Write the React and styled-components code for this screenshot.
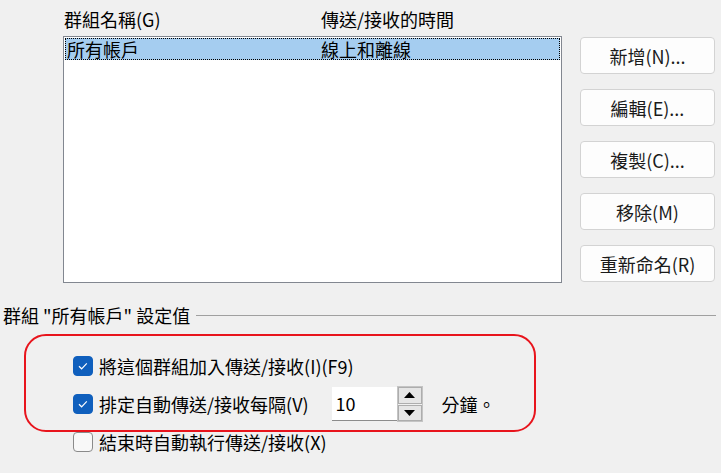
import React from "react";
import styled, { createGlobalStyle } from "styled-components";

const GlobalStyle = createGlobalStyle`
  body {
    margin: 0;
    background: #f0f0f0;
    font-family: "Noto Sans CJK TC", "Noto Sans", sans-serif;
    color: #000;
  }
`;

const Page = styled.div`
  width: 721px;
  height: 473px;
  overflow: hidden;
  font-size: 18px;
  line-height: 24px;
`;

const TopSection = styled.div`
  display: flex;
  gap: 18px;
  padding-left: 63px;
  height: 283px;
`;

const ListColumn = styled.div`
  width: 499px;
  display: flex;
  flex-direction: column;
`;

const HeaderRow = styled.div`
  display: flex;
  height: 36px;
  box-sizing: border-box;
  padding: 7px 0 0 1px;
`;

const Cell = styled.span`
  width: ${(p) => p.$width || "auto"};
  flex: none;
  white-space: nowrap;
`;

const ListBox = styled.div`
  flex: 1;
  background: #fff;
  border: 1px solid #828790;
  padding: 1px;
  box-sizing: border-box;
`;

const ListRow = styled.div`
  display: flex;
  align-items: center;
  height: 22px;
  box-sizing: border-box;
  border: 1px dotted #000;
  padding-left: 1px;
  background: #a5cdf0;
  line-height: 20px;
`;

const ButtonColumn = styled.div`
  display: flex;
  flex-direction: column;
  gap: 15px;
  padding-top: 37px;
`;

const Button = styled.button`
  width: 135px;
  height: 37px;
  border: 1px solid #d3d3d3;
  border-radius: 4px;
  background: #fdfdfd;
  font-family: inherit;
  font-size: 18px;
  color: #1a1a1a;
  padding: 0;
`;

const GroupHeader = styled.div`
  display: flex;
  align-items: center;
  gap: 6px;
  margin-top: 20px;
  padding: 0 5px 0 3px;
  white-space: nowrap;
`;

const Rule = styled.div`
  flex: 1;
  height: 1px;
  background: #a0a0a0;
`;

const Options = styled.div`
  position: relative;
  padding: 20px 0 0 73px;
`;

const Highlight = styled.div`
  position: absolute;
  left: 24px;
  top: 7px;
  width: 512px;
  height: 98px;
  box-sizing: border-box;
  border: 2px solid #e8141c;
  border-radius: 22px;
  pointer-events: none;
`;

const OptionRow = styled.div`
  display: flex;
  align-items: center;
  height: 38px;
  gap: 6px;
  white-space: nowrap;
`;

const Box = styled.span`
  width: 20px;
  height: 20px;
  box-sizing: border-box;
  border-radius: 4px;
  flex: none;
  display: flex;
  background: ${(p) => (p.$checked ? "#0f5fbd" : "#f8f8f8")};
  border: 1px solid ${(p) => (p.$checked ? "#0f5fbd" : "#8a8a8a")};
`;

const Spinner = styled.div`
  display: flex;
  align-items: center;
  margin-left: 17px;
`;

const SpinInput = styled.div`
  width: 65px;
  height: 34px;
  box-sizing: border-box;
  background: #fff;
  border-bottom: 1px solid #8c8c8c;
  padding-left: 4px;
  line-height: 32px;
`;

const SpinButtons = styled.div`
  width: 26px;
  height: 36px;
  box-sizing: border-box;
  border: 1px solid #c4c4c4;
  display: flex;
  flex-direction: column;
  gap: 1px;
`;

const SpinButton = styled.div`
  flex: 1;
  border: 1px solid #adadad;
  background: #e5e5e5;
  display: flex;
  align-items: center;
  justify-content: center;
`;

const Unit = styled.span`
  margin-left: 19px;
`;

function Checkbox({ checked }) {
  return (
    <Box $checked={checked}>
      {checked && (
        <svg width="18" height="18" viewBox="0 0 18 18">
          <path d="M5 9.3 L7.6 11.8 L12.8 6.4" fill="none" stroke="#fff" strokeWidth="1.2" />
        </svg>
      )}
    </Box>
  );
}

function Arrow({ up }) {
  return (
    <svg width="11" height="6" viewBox="0 0 11 6">
      <path d={up ? "M0 6 L5.5 0 L11 6 Z" : "M0 0 L5.5 6 L11 0 Z"} fill="#000" />
    </svg>
  );
}

export default function App() {
  return (
    <Page>
      <GlobalStyle />
      <TopSection>
        <ListColumn>
          <HeaderRow>
            <Cell $width="257px">群組名稱(G)</Cell>
            <Cell>傳送/接收的時間</Cell>
          </HeaderRow>
          <ListBox>
            <ListRow>
              <Cell $width="254px">所有帳戶</Cell>
              <Cell>線上和離線</Cell>
            </ListRow>
          </ListBox>
        </ListColumn>
        <ButtonColumn>
          <Button>新增(N)...</Button>
          <Button>編輯(E)...</Button>
          <Button>複製(C)...</Button>
          <Button>移除(M)</Button>
          <Button>重新命名(R)</Button>
        </ButtonColumn>
      </TopSection>
      <GroupHeader>
        <span>群組 "所有帳戶" 設定值</span>
        <Rule />
      </GroupHeader>
      <Options>
        <Highlight />
        <OptionRow>
          <Checkbox checked />
          <span>將這個群組加入傳送/接收(I)(F9)</span>
        </OptionRow>
        <OptionRow>
          <Checkbox checked />
          <span>排定自動傳送/接收每隔(V)</span>
          <Spinner>
            <SpinInput>10</SpinInput>
            <SpinButtons>
              <SpinButton>
                <Arrow up />
              </SpinButton>
              <SpinButton>
                <Arrow />
              </SpinButton>
            </SpinButtons>
            <Unit>分鐘。</Unit>
          </Spinner>
        </OptionRow>
        <OptionRow>
          <Checkbox />
          <span>結束時自動執行傳送/接收(X)</span>
        </OptionRow>
      </Options>
    </Page>
  );
}
